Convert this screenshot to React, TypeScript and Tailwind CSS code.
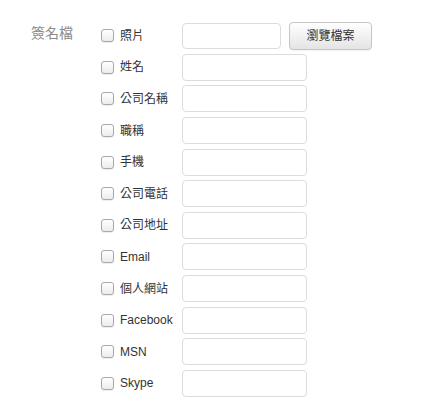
import React from "react";

const rows = ["姓名", "公司名稱", "職稱", "手機", "公司電話", "公司地址", "Email", "個人網站", "Facebook", "MSN", "Skype"];

function Box() {
  return (
    <div className="w-[13px] h-[13px] shrink-0 rounded-[3px] border border-[#a8a8a8] bg-gradient-to-b from-white to-[#ececec] shadow-[0_1px_1px_rgba(0,0,0,0.08)]" />
  );
}

export default function App() {
  const font = { fontFamily: '"Liberation Sans", "Noto Sans CJK TC", sans-serif' };
  return (
    <div className="w-[425px] h-[411px] bg-white flex pt-[20px] pl-[31px]" style={font}>
      <div className="w-[70px] shrink-0 pt-[3px] text-[14px] leading-[20px] text-[#8a8a8a]">簽名檔</div>
      <div className="flex flex-col">
        <div className="h-[31.6px] flex items-center">
          <Box />
          <div className="ml-[6px] w-[62px] text-[12px] text-[#333]">照片</div>
          <div className="w-[99px] h-[26px] rounded-[4px] border border-[#dcdcdc] bg-white" />
          <div className="ml-[8px] w-[83px] h-[28px] rounded-[4px] border border-[#c6c6c6] bg-gradient-to-b from-white to-[#e4e4e4] flex items-center justify-center text-[12px] text-[#333] shadow-[0_1px_1px_rgba(0,0,0,0.06)]">
            瀏覽檔案
          </div>
        </div>
        {rows.map((r) => (
          <div key={r} className="h-[31.6px] flex items-center">
            <Box />
            <div className="ml-[6px] w-[62px] text-[12px] text-[#333]">{r}</div>
            <div className="w-[125px] h-[27px] rounded-[4px] border border-[#dcdcdc] bg-white" />
          </div>
        ))}
      </div>
    </div>
  );
}
